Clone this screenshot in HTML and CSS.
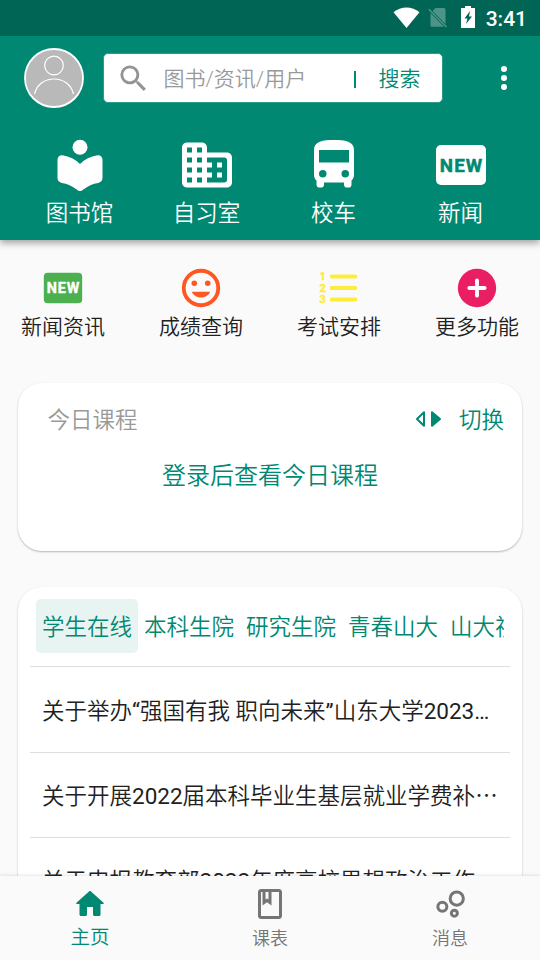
FILE: index.html
```html
<!DOCTYPE html>
<html lang="zh-CN">
<head>
<meta charset="utf-8">
<title>主页</title>
<link rel="stylesheet" href="styles.css">
</head>
<body>
<div class="app">
  <header class="header">
    <div class="status">
      <svg class="status-wifi" viewBox="0 0 27 22"><path d="M.5 5.200C8-1.100 19-1.100 26.500 5.200L13.500 21z" fill="#fff"/></svg>
      <svg class="status-sim" viewBox="0 0 20 22"><path d="M7.500 1H16q1.500 0 1.500 1.500V17L4.500 4zM2.500 6 16 19.700H4q-1.500 0-1.500-1.500z" fill="#4d9488"/><path d="m.8 2.300 17.700 17.700" stroke="#4d9488" stroke-width="1.600"/></svg>
      <svg class="status-battery" viewBox="0 0 14 22"><path d="M4 0h6v2h4v20H0V2h4z" fill="#fff"/><path d="M9 5 3.500 12.500h3L5 18l6-7.500H8z" fill="#006554"/></svg>
      <span class="clock">3:41</span>
    </div>
    <div class="toolbar">
      <svg class="avatar" viewBox="0 0 60 60"><circle cx="30" cy="30" r="29" fill="#b9b9b9" stroke="#fff" stroke-width="1.800"/><g fill="none" stroke="#fff" stroke-width="1.200"><circle cx="30" cy="17.500" r="9.300"/><path d="M10.500 46C13 36 21 31 30 31s17 5 19.500 15"/></g></svg>
      <div class="search">
        <svg class="search-icon" viewBox="0 0 24 24"><path fill="#939393" d="M15.500 14h-.79l-.28-.27A6.471 6.471 0 0 0 16 9.500 6.500 6.500 0 1 0 9.500 16c1.610 0 3.090-.59 4.230-1.570l.27.28v.79l5 4.990L20.490 19l-4.990-5zm-6 0C7.010 14 5 11.990 5 9.500S7.010 5 9.500 5 14 7.010 14 9.500 11.990 14 9.500 14z"/></svg>
        <span class="placeholder">图书/资讯/用户</span>
        <span class="search-line"></span>
        <span class="search-button">搜索</span>
      </div>
      <div class="more"><i></i><i></i><i></i></div>
    </div>
    <nav class="shortcuts">
      <div class="shortcut">
        <svg viewBox="0 0 24 24"><circle cx="12" cy="4.900" r="3"/><path d="M12 11.550C10.150 9.820 7.800 8.600 5 8.130 3.900 7.950 3 8.800 3 9.900v7.300c0 1 .75 1.800 1.750 1.950 2.100.3 4.100 1.150 6.350 2.900.55.450 1.250.45 1.800 0 2.250-1.750 4.250-2.600 6.350-2.900 1-.15 1.750-.95 1.750-1.950V9.900c0-1.100-.9-1.950-2-1.770-2.800.47-5.150 1.690-7 3.420z"/></svg>
        <span>图书馆</span>
      </div>
      <div class="shortcut">
        <svg viewBox="0 0 24 24"><path d="M12 7V5c0-1.100-.9-2-2-2H4c-1.100 0-2 .9-2 2v14c0 1.100.9 2 2 2h16c1.100 0 2-.9 2-2V9c0-1.100-.9-2-2-2h-8zM6 19H4v-2h2v2zm0-4H4v-2h2v2zm0-4H4V9h2v2zm0-4H4V5h2v2zm4 12H8v-2h2v2zm0-4H8v-2h2v2zm0-4H8V9h2v2zm0-4H8V5h2v2zm9 12h-7v-2h2v-2h-2v-2h2v-2h-2V9h7c.55 0 1 .45 1 1v8c0 .55-.45 1-1 1zm-1-8h-2v2h2v-2zm0 4h-2v2h2v-2z"/></svg>
        <span>自习室</span>
      </div>
      <div class="shortcut">
        <svg viewBox="0 0 24 24"><path d="M4 16c0 .88.390 1.670 1 2.220v1.530a1.250 1.250 0 0 0 1.250 1.250h.5A1.250 1.250 0 0 0 8 19.750V19h8v.75A1.250 1.250 0 0 0 17.250 21h.5A1.250 1.250 0 0 0 19 19.750v-1.530c.61-.55 1-1.340 1-2.220V6c0-3.500-3.580-4-8-4s-8 .5-8 4v10zm3.500 1a1.500 1.500 0 1 1 0-3 1.500 1.500 0 0 1 0 3zm9 0a1.500 1.500 0 1 1 0-3 1.500 1.500 0 0 1 0 3zM18 11H6V6h12v5z"/></svg>
        <span>校车</span>
      </div>
      <div class="shortcut">
        <svg viewBox="0 0 24 24"><rect x="2" y="4" width="20" height="16" rx="2"/><text class="new-label new-label-teal" x="12" y="14.700" textLength="17">NEW</text></svg>
        <span>新闻</span>
      </div>
    </nav>
  </header>

  <main class="content">
    <section class="functions">
      <div class="function">
        <svg viewBox="0 0 24 24"><rect x="2" y="4" width="20" height="16" rx="2" fill="#4caf50"/><text class="new-label new-label-white" x="12" y="14.700" textLength="17">NEW</text></svg>
        <span>新闻资讯</span>
      </div>
      <div class="function">
        <svg viewBox="0 0 24 24" fill="#ff5722"><circle cx="12" cy="12" r="9" fill="none" stroke="#ff5722" stroke-width="2"/><circle cx="8.500" cy="9.500" r="1.450"/><circle cx="15.500" cy="9.500" r="1.450"/><path d="M12 17c2.100 0 3.850-1.100 4.650-2.600.15-.25-.05-.4-.3-.4h-8.700c-.25 0-.45.150-.3.400C8.150 15.900 9.900 17 12 17z"/></svg>
        <span>成绩查询</span>
      </div>
      <div class="function">
        <svg viewBox="0 0 24 24"><path d="M8.200 6h12.300M8.200 12h12.300M8.200 18h12.300" stroke="#ffeb3b" stroke-width="2" stroke-linecap="round"/><g class="list-number"><text x="3.500" y="8">1</text><text x="3.500" y="14">2</text><text x="3.500" y="20">3</text></g></svg>
        <span>考试安排</span>
      </div>
      <div class="function">
        <svg viewBox="0 0 24 24"><circle cx="12" cy="12" r="10" fill="#e91e63"/><path d="M8 12h8M12 8v8" stroke="#fff" stroke-width="2" stroke-linecap="round"/></svg>
        <span>更多功能</span>
      </div>
    </section>

    <section class="card courses">
      <div class="courses-head">
        <h2>今日课程</h2>
        <div class="switch">
          <svg viewBox="0 0 28 20"><path d="M10 3.200v13.600L3 10z" fill="none" stroke="#008872" stroke-width="2" stroke-linejoin="round"/><path d="M18 3.200v13.600L26 10z" fill="#008872" stroke="#008872" stroke-width="2" stroke-linejoin="round"/></svg>
          <span>切换</span>
        </div>
      </div>
      <p class="login-hint">登录后查看今日课程</p>
    </section>

    <section class="card news">
      <div class="tabs">
        <span class="tab tab-active">学生在线</span>
        <span class="tab">本科生院</span>
        <span class="tab">研究生院</span>
        <span class="tab">青春山大</span>
        <span class="tab">山大视点</span>
      </div>
      <ul class="news-list">
        <li>关于举办<span class="latin">“</span>强国有我<span class="latin"> </span>职向未来<span class="latin">”</span>山东大学<span class="latin">2023…</span></li>
        <li>关于开展<span class="latin">2022</span>届本科毕业生基层就业学费补<span class="wide-dots">…</span></li>
        <li>关于申报教育部<span class="latin">2022</span>年度高校思想政治工作</li>
      </ul>
    </section>
  </main>

  <nav class="bottom-nav">
    <div class="nav-item nav-active">
      <svg viewBox="0 0 24 24" fill="currentColor"><path d="M10 19v-5h4v5c0 .55.450 1 1 1h3c.55 0 1-.45 1-1v-7h1.700c.46 0 .68-.57.330-.87L12.670 3.600c-.38-.34-.96-.34-1.340 0l-8.360 7.530c-.34.300-.13.870.330.870H5v7c0 .55.450 1 1 1h3c.55 0 1-.45 1-1z"/></svg>
      <span>主页</span>
    </div>
    <div class="nav-item">
      <svg viewBox="0 0 24 24" fill="currentColor"><path fill-rule="evenodd" d="M18 2H6c-1.100 0-2 .9-2 2v16c0 1.100.9 2 2 2h12c1.100 0 2-.9 2-2V4c0-1.100-.9-2-2-2zM9 4h2v5l-1-.75L9 9V4zm9 16H6V4h1v9l3-2.250L13 13V4h5v16z"/></svg>
      <span>课表</span>
    </div>
    <div class="nav-item">
      <svg viewBox="0 0 24 24" fill="none" stroke="currentColor" stroke-width="2"><circle cx="6.900" cy="13.900" r="3"/><circle cx="16.500" cy="8.400" r="4.400"/><circle cx="14.900" cy="18.100" r="2"/></svg>
      <span>消息</span>
    </div>
  </nav>
</div>
</body>
</html>
```
FILE: styles.css
```css
* { box-sizing: border-box; }

body {
  margin: 0;
  background: #fafafa;
  color: #212121;
  font-family: Roboto, "Noto Sans CJK SC", sans-serif;
  font-weight: 350;
}

.app {
  display: flex;
  flex-direction: column;
  width: 540px;
  height: 960px;
  overflow: hidden;
}

svg { display: block; flex: none; }

.header {
  flex: none;
  height: 240px;
  background: #008872;
  color: #fff;
  box-shadow: 0 3px 7px rgba(0, 0, 0, 0.36);
  z-index: 1;
}

.status {
  display: flex;
  align-items: center;
  justify-content: flex-end;
  height: 36px;
  padding-right: 13px;
  background: #006554;
}
.status-wifi { width: 27px; height: 22px; margin-right: 8px; }
.status-sim { width: 20px; height: 22px; margin-right: 13px; }
.status-battery { width: 14px; height: 22px; margin-right: 11px; margin-bottom: 2px; }
.clock { font-size: 21px; font-weight: 500; line-height: 36px; padding-top: 2px; }

.toolbar {
  display: flex;
  align-items: center;
  height: 84px;
  padding: 0 30px 0 24px;
}
.avatar { width: 60px; height: 60px; }
.search {
  display: flex;
  flex: none;
  align-items: center;
  width: 340px;
  height: 50px;
  margin-left: 19px;
  padding-left: 12px;
  border: 1px solid #2b9c89;
  border-radius: 5px;
  background: #fff;
  color: #008872;
  font-size: 21px;
}
.search-icon { width: 35px; height: 35px; }
.placeholder { flex: none; width: 203px; padding-left: 12.5px; color: #999; white-space: nowrap; }
.search-line { width: 2px; height: 17px; margin-top: 3px; background: #008872; }
.search-button { margin-left: 22.5px; }
.placeholder, .search-button { line-height: 30px; margin-top: 1px; }
.more { display: flex; flex-direction: column; gap: 3px; margin-left: 58px; }
.more i { width: 6px; height: 6px; border-radius: 50%; background: #fff; }

.shortcuts {
  display: grid;
  grid-template-columns: repeat(4, 1fr);
  padding: 15px 16px 0;
}
.shortcut { display: flex; flex-direction: column; align-items: center; gap: 3px; font-size: 22.5px; line-height: 30px; }
.shortcut svg { width: 60px; height: 60px; fill: #fff; }

.new-label {
  font: 700 7.5px Roboto, sans-serif;
  text-anchor: middle;
  stroke-width: 0.2;
  stroke-linejoin: round;
}
.new-label-teal { fill: #008872; stroke: #008872; }
.new-label-white { fill: #fff; stroke: #fff; }

.content { flex: 1; min-height: 0; overflow: hidden; padding: 25px 18px 0; }

.functions { display: flex; justify-content: space-between; padding: 0 3px; }
.function { display: flex; flex-direction: column; align-items: center; gap: 1px; font-size: 21px; line-height: 30px; }
.function svg { width: 46px; height: 46px; }
.list-number {
  fill: #ffeb3b;
  stroke: #ffeb3b;
  stroke-width: 0.2;
  font: 700 5.800px Roboto, sans-serif;
  text-anchor: middle;
}

.card {
  border-radius: 24px;
  background: #fff;
  box-shadow: 0 1px 2px rgba(0, 0, 0, 0.28);
}

.courses { height: 168px; margin-top: 41px; padding: 18px 18px 0 29.5px; }
.courses-head { display: flex; justify-content: space-between; height: 36px; line-height: 38px; font-size: 22.5px; }
.courses h2 { margin: 0; color: #999; font-size: inherit; font-weight: inherit; }
.switch { display: flex; align-items: flex-start; color: #008872; }
.switch svg { width: 28px; height: 20px; margin: 8px 16.5px 0 0; }
.login-hint {
  margin: 21px 0 0 -11.5px;
  color: #008872;
  font-size: 24px;
  line-height: 36px;
  text-align: center;
}

.news { height: 400px; margin-top: 36px; padding: 12px 12px 0; }
.tabs { display: flex; margin: 0 6px; overflow: hidden; color: #008872; }
.tab { flex: none; width: 102px; height: 54px; border-radius: 5px; font-size: 22.5px; line-height: 56px; text-align: center; white-space: nowrap; }
.tab-active { background: #e8f4f1; }
.news-list { margin: 13px 0 0; padding: 0; list-style: none; }
.news-list li {
  height: 85.5px;
  padding: 0 0 0 12px;
  border-top: 1px solid #dedede;
  font-size: 22.5px;
  line-height: 87px;
  white-space: nowrap;
}
.news-list li:first-child { line-height: 88px; }
.latin { font-weight: 400; }
.wide-dots { font-family: "Noto Sans CJK SC", sans-serif; line-height: 1; }

.bottom-nav {
  flex: none;
  display: grid;
  grid-template-columns: repeat(3, 1fr);
  height: 84px;
  background: #fafafa;
  box-shadow: 0 -1px 3px rgba(0, 0, 0, 0.1);
  z-index: 1;
}
.nav-item { display: flex; flex-direction: column; align-items: center; padding-top: 10px; color: #757575; font-size: 18px; line-height: 30px; }
.nav-item svg { width: 36px; height: 36px; }
.nav-item span { padding-top: 2px; }
.nav-active { color: #008872; font-size: 19.5px; }
.nav-active span { padding-top: 1px; }
```
